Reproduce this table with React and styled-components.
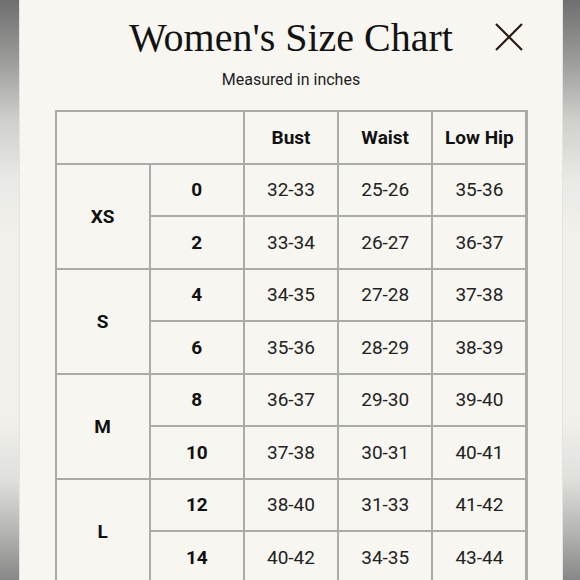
import { createGlobalStyle, styled } from 'styled-components'

const GlobalStyle = createGlobalStyle`
    html, body {
        margin: 0;
        padding: 0;
        height: 580px;
        overflow: hidden;
    }
    body {
        font-family: Roboto, "Liberation Sans", sans-serif;
    }
`

const Page = styled.div`
    height: 580px;
    display: flex;
    background: linear-gradient(
        to bottom,
        #6f6f6f 0,
        #9b9b9a 60px,
        #cfcfcc 120px,
        #e9e9e5 180px,
        #f1f0eb 230px,
        #f1f0eb 420px,
        #dfdfdb 480px,
        #b6b6b4 530px,
        #878787 580px
    );
`

const Panel = styled.div`
    position: relative;
    width: 542px;
    margin-left: 20px;
    height: 580px;
    background: #f7f6f1;
    box-shadow: -1px 0 0 #e4e3df, 1px 0 0 #e4e3df;
    display: flex;
    flex-direction: column;
    align-items: center;
    padding-top: 18px;
    box-sizing: border-box;
`

const Title = styled.h1`
    margin: 0;
    font-family: "Liberation Serif", "DejaVu Serif", serif;
    font-weight: 400;
    font-size: 40px;
    line-height: 40px;
    color: #121212;
`

const Subtitle = styled.p`
    margin: 12px 0 0;
    font-size: 16px;
    line-height: 20px;
    color: #1d1d1d;
`

const CloseButton = styled.button`
    position: absolute;
    left: 475px;
    top: 23px;
    width: 28px;
    height: 28px;
    padding: 0;
    border: none;
    background: none;
    color: #2a1a12;
`

const Chart = styled.div`
    margin-top: 20px;
    width: 473px;
    display: grid;
    grid-template-columns: repeat(5, 1fr);
    grid-auto-rows: 50.5px;
    gap: 2px;
    padding: 2px;
    box-sizing: border-box;
    background: #ababa9;
`

const Cell = styled.div`
    display: flex;
    align-items: center;
    justify-content: center;
    background: #f7f6f1;
    font-size: 19px;
    font-weight: ${p => (p.$bold ? 700 : 400)};
    color: ${p => (p.$bold ? '#111' : '#222')};
    grid-row: ${p => (p.$span ? `span ${p.$span}` : 'auto')};
    grid-column: ${p => (p.$wide ? `span ${p.$wide}` : 'auto')};
`

const sizes = [
    { label: 'XS', rows: [['0', '32-33', '25-26', '35-36'], ['2', '33-34', '26-27', '36-37']] },
    { label: 'S', rows: [['4', '34-35', '27-28', '37-38'], ['6', '35-36', '28-29', '38-39']] },
    { label: 'M', rows: [['8', '36-37', '29-30', '39-40'], ['10', '37-38', '30-31', '40-41']] },
    { label: 'L', rows: [['12', '38-40', '31-33', '41-42'], ['14', '40-42', '34-35', '43-44']] },
]

export default function App() {
    return (
        <>
            <GlobalStyle />
            <Page>
                <Panel>
                    <Title>Women's Size Chart</Title>
                    <CloseButton aria-label="Close">
                        <svg width="28" height="28" viewBox="0 0 28 28">
                            <path d="M1 1 L27 27 M27 1 L1 27" stroke="currentColor" strokeWidth="2.2" fill="none" />
                        </svg>
                    </CloseButton>
                    <Subtitle>Measured in inches</Subtitle>

                    <Chart>
                        <Cell $wide={2} />
                        <Cell $bold>Bust</Cell>
                        <Cell $bold>Waist</Cell>
                        <Cell $bold>Low Hip</Cell>

                        {sizes.map(size => [
                            <Cell key={size.label} $bold $span={2}>{size.label}</Cell>,
                            ...size.rows.map(row => [
                                <Cell key={row[0]} $bold>{row[0]}</Cell>,
                                <Cell key={row[0] + 'b'}>{row[1]}</Cell>,
                                <Cell key={row[0] + 'w'}>{row[2]}</Cell>,
                                <Cell key={row[0] + 'h'}>{row[3]}</Cell>,
                            ]),
                        ])}
                    </Chart>
                </Panel>
            </Page>
        </>
    )
}
